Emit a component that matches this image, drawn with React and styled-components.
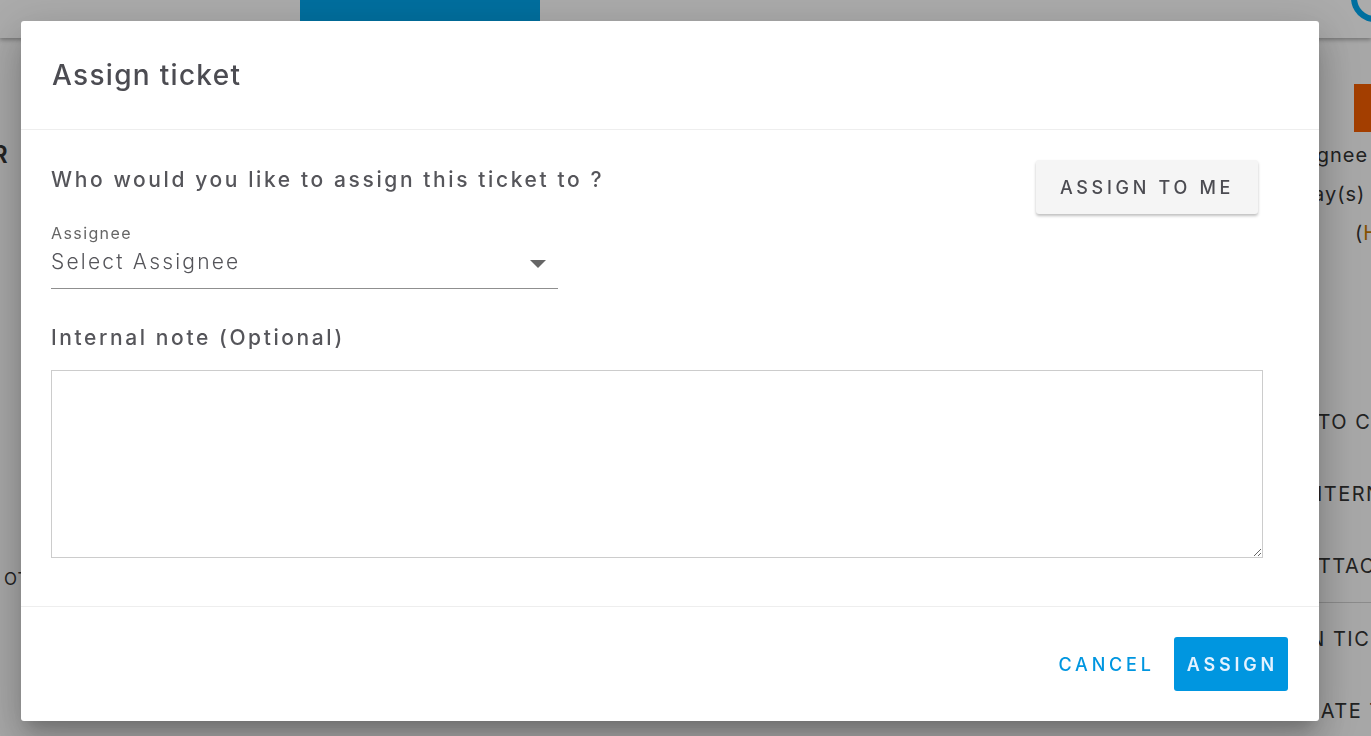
import React from 'react';
import styled, { createGlobalStyle } from 'styled-components';

const GlobalStyle = createGlobalStyle`
    html, body {
        margin: 0;
        padding: 0;
        height: 100%;
        overflow: hidden;
    }
    body {
        font-family: Inter, "Open Sans", "Liberation Sans", sans-serif;
        background: #fafafa;
    }
`;

const Page = styled.div`
    display: flex;
    flex-direction: column;
    height: 100vh;
    background: #fafafa;
`;

const TopBar = styled.div`
    display: flex;
    flex-shrink: 0;
    height: 38px;
    background: #ffffff;
    box-shadow: 0 2px 4px rgba(0, 0, 0, 0.3);
    padding-left: 300px;
    position: relative;
    z-index: 1;
    overflow: hidden;
`;

const Tab = styled.div`
    width: 240px;
    background: ${props => props.active ? "#00a6ed" : "transparent"};
`;

const Logo = styled.div`
    flex-shrink: 0;
    align-self: flex-start;
    margin-left: auto;
    margin-right: -28px;
    margin-top: -26px;
    width: 48px;
    height: 48px;
    box-sizing: border-box;
    border-radius: 50%;
    border: 6px solid #00a6ed;
    border-top-color: transparent;
`;

const Main = styled.div`
    flex: 1;
    display: flex;
    min-height: 0;
`;

const LeftCol = styled.div`
    width: 210px;
    display: flex;
    flex-direction: column;
    padding-top: 102px;
    color: #333;
`;

const LeftLetter = styled.div`
    font-size: 24px;
    font-weight: 600;
    margin-left: -8px;
`;

const LeftSmall = styled.div`
    margin-top: 400px;
    margin-left: 4px;
    font-size: 17px;
    letter-spacing: 1px;
`;

const Center = styled.div`
    flex: 1;
`;

const RightCol = styled.div`
    width: 215px;
    display: flex;
    flex-direction: column;
    color: #333;
    padding-top: 46px;
    overflow: hidden;
`;

const Badge = styled.div`
    align-self: flex-end;
    flex-shrink: 0;
    width: 17px;
    height: 48px;
    background: #f35d00;
    margin-bottom: 4px;
`;

const InfoLine = styled.div`
    font-size: 20px;
    line-height: 39px;
    letter-spacing: 1px;
    padding-left: ${props => props.indent}px;
    white-space: nowrap;
`;

const Orange = styled.span`
    color: #c77a00;
`;

const Actions = styled.div`
    margin-top: 133px;
    display: flex;
    flex-direction: column;
`;

const ActionItem = styled.div`
    display: flex;
    flex-shrink: 0;
    align-items: center;
    height: 72px;
    padding-left: ${props => props.indent}px;
    font-size: 20px;
    letter-spacing: 1.5px;
    white-space: nowrap;
    border-top: ${props => props.divider ? "1px solid #cfcfcf" : "none"};
`;

const Overlay = styled.div`
    position: fixed;
    inset: 0;
    background: rgba(0, 0, 0, 0.33);
    z-index: 10;
`;

const Modal = styled.div`
    position: fixed;
    top: 21px;
    left: 21px;
    width: 1298px;
    height: 700px;
    background: #ffffff;
    border-radius: 3px;
    z-index: 11;
    display: flex;
    flex-direction: column;
    color: #55555a;
    box-shadow: 0 11px 15px -7px rgba(0, 0, 0, 0.2),
        0 24px 38px 3px rgba(0, 0, 0, 0.14),
        0 9px 46px 8px rgba(0, 0, 0, 0.12);
`;

const Header = styled.div`
    height: 108px;
    display: flex;
    align-items: center;
    padding: 0 31px;
    border-bottom: 1px solid #eeeeee;
`;

const Title = styled.h2`
    margin: 0;
    font-size: 28px;
    font-weight: 500;
    color: #4c4c52;
    letter-spacing: 1.3px;
`;

const Body = styled.div`
    flex: 1;
    padding: 30px 56px 0 30px;
    display: flex;
    flex-direction: column;
`;

const TopRow = styled.div`
    display: flex;
    justify-content: space-between;
    align-items: flex-start;
`;

const Question = styled.div`
    font-size: 21px;
    font-weight: 500;
    line-height: 40px;
    letter-spacing: 2.6px;
`;

const FieldLabel = styled.div`
    margin-top: 23px;
    font-size: 16px;
    line-height: 20px;
    letter-spacing: 1.4px;
    color: #666;
`;

const Select = styled.div`
    width: 507px;
    display: flex;
    align-items: center;
    justify-content: space-between;
    height: 46px;
    box-sizing: border-box;
    padding-bottom: 8px;
    border-bottom: 1px solid #8f8f8f;
    font-size: 21px;
    font-weight: 300;
    letter-spacing: 2.2px;
    color: #55555a;
    cursor: pointer;
`;

const Caret = styled.svg`
    margin-right: 12px;
    margin-top: 4px;
`;

const SecondaryButton = styled.button`
    margin-right: 5px;
    height: 54px;
    width: 222px;
    border: none;
    border-radius: 3px;
    background: #f5f5f5;
    color: #4c4c52;
    font-family: inherit;
    font-size: 18px;
    font-weight: 500;
    letter-spacing: 3.7px;
    box-shadow: 0 2px 3px rgba(0, 0, 0, 0.25);
    cursor: pointer;
`;

const NoteLabel = styled.div`
    margin-top: 34px;
    font-size: 21px;
    font-weight: 500;
    line-height: 30px;
    letter-spacing: 2.6px;
`;

const NoteInput = styled.textarea`
    margin-top: 17px;
    height: 188px;
    width: 100%;
    box-sizing: border-box;
    border: 1px solid #cccccc;
    border-radius: 0;
    font-family: inherit;
    font-size: 16px;
    padding: 8px;
    outline: none;
    resize: vertical;
`;

const Footer = styled.div`
    height: 114px;
    border-top: 1px solid #eeeeee;
    display: flex;
    align-items: center;
    justify-content: flex-end;
    gap: 9px;
    padding: 0 31px;
`;

const FooterButton = styled.button`
    height: 54px;
    padding: 0 10px 0 13px;
    border: none;
    border-radius: 3px;
    font-family: inherit;
    font-size: 18px;
    font-weight: ${props => props.primary ? 600 : 500};
    letter-spacing: 3.8px;
    background: ${props => props.primary ? "#0096e0" : "transparent"};
    color: ${props => props.primary ? "#e4f2ff" : "#0096e0"};
    cursor: pointer;
`;

const actions = [
    { text: "SEND TO CSR", indent: 94 },
    { text: "ADD INTERNAL NOTE", indent: 90 },
    { text: "ADD ATTACHMENT", indent: 94 },
    { text: "ASSIGN TICKET", indent: 86, divider: true },
    { text: "ESCALATE TICKET", indent: 93 },
];

const App = () => {
    return (
        <>
            <GlobalStyle />
            <Page>
                <TopBar>
                    <Tab active />
                    <Logo />
                </TopBar>
                <Main>
                    <LeftCol>
                        <LeftLetter>R</LeftLetter>
                        <LeftSmall>OT</LeftSmall>
                    </LeftCol>
                    <Center />
                    <RightCol>
                        <Badge />
                        <InfoLine indent={117}>Assignee</InfoLine>
                        <InfoLine indent={128}>1 day(s)</InfoLine>
                        <InfoLine indent={199}>(<Orange>High</Orange>)</InfoLine>
                        <Actions>
                            {actions.map(a => (
                                <ActionItem key={a.text} indent={a.indent} divider={a.divider}>{a.text}</ActionItem>
                            ))}
                        </Actions>
                    </RightCol>
                </Main>
            </Page>
            <Overlay />
            <Modal>
                <Header>
                    <Title>Assign ticket</Title>
                </Header>
                <Body>
                    <TopRow>
                        <div>
                            <Question>Who would you like to assign this ticket to ?</Question>
                            <FieldLabel>Assignee</FieldLabel>
                            <Select>
                                <span>Select Assignee</span>
                                <Caret width="16" height="8" viewBox="0 0 16 8">
                                    <path d="M0 0 L16 0 L8 8 Z" fill="#666" />
                                </Caret>
                            </Select>
                        </div>
                        <SecondaryButton>ASSIGN TO ME</SecondaryButton>
                    </TopRow>
                    <NoteLabel>Internal note (Optional)</NoteLabel>
                    <NoteInput />
                </Body>
                <Footer>
                    <FooterButton>CANCEL</FooterButton>
                    <FooterButton primary>ASSIGN</FooterButton>
                </Footer>
            </Modal>
        </>
    );
};

export default App;
